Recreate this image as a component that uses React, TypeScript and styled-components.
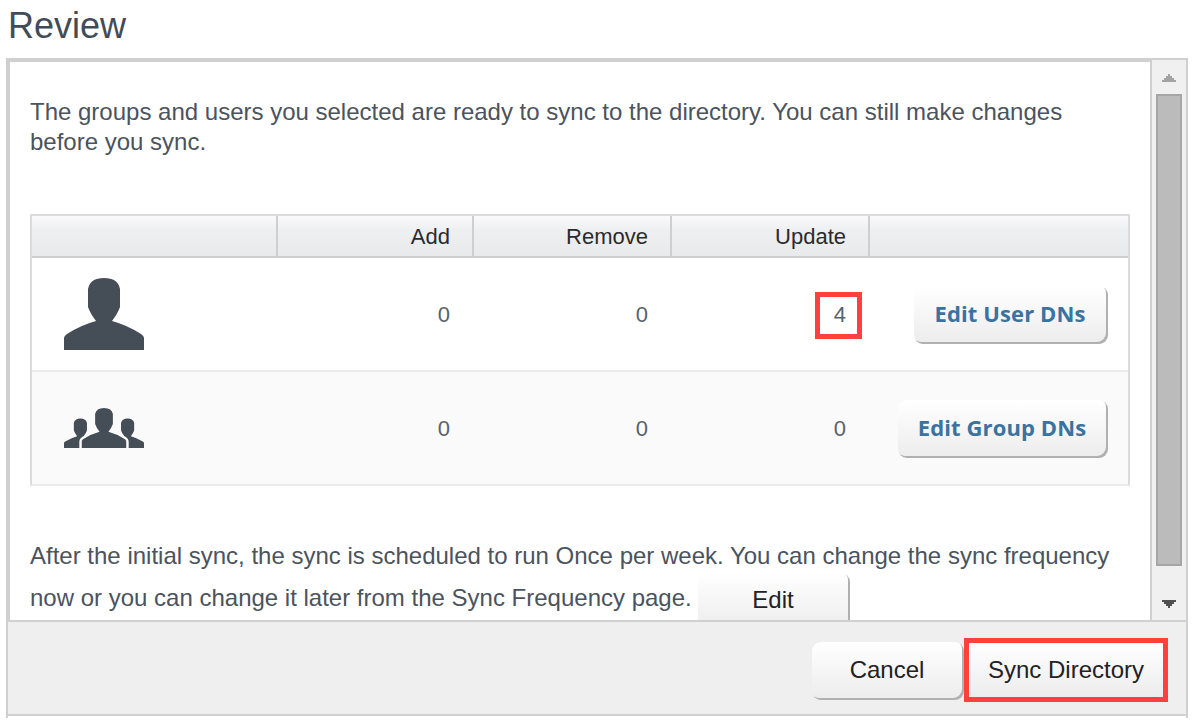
import React from "react";
import styled, { createGlobalStyle } from "styled-components";

const GlobalStyle = createGlobalStyle`
  *, *::before, *::after { box-sizing: border-box; }
  body {
    margin: 0;
    background: #fff;
    color: #4b535d;
    font-family: "Liberation Sans", Arial, sans-serif;
    overflow: hidden;
  }
`;

const Page = styled.div`
  width: 1200px;
  height: 726px;
  padding: 0 12px 0 6px;
`;

const Title = styled.h1`
  margin: 0;
  height: 58px;
  padding-left: 2px;
  font-size: 36px;
  line-height: 52px;
  font-weight: 400;
  color: #424c57;
`;

const Dialog = styled.div`
  height: 660px;
  border: solid #d0d0d0;
  border-width: 2px 2px 0;
`;

const Body = styled.div`
  display: flex;
  height: 560px;
`;

const Content = styled.div`
  flex: 1;
  height: 560px;
  overflow: hidden;
  border: solid #d0d0d0;
  border-width: 2px 2px 0;
  padding: 35px 20px 0;
`;

const Intro = styled.p`
  margin: 0;
  height: 117px;
  font-size: 24px;
  line-height: 30px;
`;

const Line = styled.span`
  display: block;
  white-space: nowrap;
`;

const Table = styled.div`
  width: 1100px;
  border: 2px solid #dcdcdc;
  border-bottom-color: #ebebeb;
`;

const columns = "246px 196px 198px 198px 258px";

const HeaderRow = styled.div`
  display: grid;
  grid-template-columns: ${columns};
  height: 42px;
  border-bottom: 2px solid #cfcfcf;
  background: linear-gradient(#fafafb, #eeeff1 35%, #e9eaeb);
`;

const HeaderCell = styled.div`
  padding-right: 22px;
  border-right: 2px solid #cfcfcf;
  text-align: right;
  font-size: 22px;
  line-height: 41px;
  color: #2b2b2b;
  &:last-child { border-right: 0; }
`;

const Row = styled.div<{ $shaded?: boolean }>`
  display: grid;
  grid-template-columns: ${columns};
  align-items: center;
  height: ${(p) => (p.$shaded ? 112 : 114)}px;
  background: ${(p) => (p.$shaded ? "#fafafa" : "#fff")};
  border-bottom: ${(p) => (p.$shaded ? 0 : 2)}px solid #ebebeb;
`;

const IconCell = styled.div`
  padding-left: 32px;
  svg { display: block; }
`;

const Count = styled.div`
  position: relative;
  padding: 2px 24px 0 0;
  text-align: right;
  font-size: 22px;
  line-height: 26px;
  color: #59626c;
`;

const CountMark = styled.span`
  position: absolute;
  right: 8px;
  top: -8px;
  width: 47px;
  height: 47px;
  border: 5px solid #ff403c;
`;

const ActionCell = styled.div`
  display: flex;
  justify-content: flex-end;
  padding: 2px 20px 0 0;
`;

const Button = styled.button<{ $width: number }>`
  flex: none;
  width: ${(p) => p.$width}px;
  height: 58px;
  padding: 0 2px 2px 0;
  border: 0;
  border-radius: 9px;
  background: linear-gradient(#fff, #ececec);
  box-shadow: inset -2px -2px 0 #b0b0b0;
  font: 24px "Liberation Sans", Arial, sans-serif;
  color: #222;
`;

const LinkButton = styled(Button)`
  padding-bottom: 4px;
  font: 700 22px "Open Sans", "Noto Sans", sans-serif;
  letter-spacing: 0.1px;
  color: #3a739f;
`;

const Schedule = styled.div`
  padding-top: 49px;
  font-size: 24px;
  line-height: 42px;
`;

const ScheduleRow = styled.div`
  display: flex;
  justify-content: flex-start;
`;

const ScheduleText = styled(Line)`
  width: 668px;
`;

const EditButton = styled(Button)`
  margin-top: -4px;
  padding-bottom: 4px;
`;

const Scrollbar = styled.div`
  display: flex;
  flex-direction: column;
  align-items: center;
  width: 34px;
  background: #f0f0f0;
  svg { display: block; margin: 14px 0 12px; }
  svg:last-child { margin: 34px 0 0; }
`;

const Thumb = styled.div`
  width: 26px;
  height: 472px;
  flex: none;
  background: #bbb;
  border: 2px solid #a6a6a6;
`;

const Footer = styled.div`
  display: flex;
  justify-content: flex-end;
  height: 96px;
  padding: 16px 18px 0 0;
  border: solid #d0d0d0;
  border-width: 2px 0;
  background: #efefef;
`;

const PrimaryFrame = styled.div`
  width: 204px;
  height: 64px;
  border: 5px solid #ff403c;
`;

const PrimaryButton = styled(Button)`
  height: 54px;
  border-radius: 2px;
  box-shadow: none;
  padding: 0;
`;

const CancelButton = styled(Button)`
  margin-top: 4px;
`;

const PERSON =
  "M0 72V60Q0 58 3 56Q17 47 32 43Q26 35 24 29V11Q26 0 40 0Q54 0 56 11V29Q54 35 48 43Q63 47 77 56Q80 58 80 60V72Z";

const UserIcon = () => (
  <svg width="80" height="72" viewBox="0 0 80 72" fill="#454d57">
    <path d={PERSON} />
  </svg>
);

const GroupIcon = () => (
  <svg width="80" height="40" viewBox="0 0 80 40" fill="#454d57">
    <path d={PERSON} transform="translate(0 10.5) scale(.41)" />
    <path d={PERSON} transform="translate(47.2 10.5) scale(.41)" />
    <path
      d={PERSON}
      transform="translate(17.8 0) scale(.555)"
      stroke="#fafafa"
      strokeWidth="9"
      paintOrder="stroke"
    />
  </svg>
);

export default function App() {
  return (
    <Page>
      <GlobalStyle />
      <Title>Review</Title>
      <Dialog>
        <Body>
          <Content>
            <Intro>
              <Line>The groups and users you selected are ready to sync to the directory. You can still make changes</Line>
              <Line>before you sync.</Line>
            </Intro>
            <Table>
              <HeaderRow>
                <HeaderCell />
                <HeaderCell>Add</HeaderCell>
                <HeaderCell>Remove</HeaderCell>
                <HeaderCell>Update</HeaderCell>
                <HeaderCell />
              </HeaderRow>
              <Row>
                <IconCell><UserIcon /></IconCell>
                <Count>0</Count>
                <Count>0</Count>
                <Count>4<CountMark /></Count>
                <ActionCell><LinkButton $width={194}>Edit User DNs</LinkButton></ActionCell>
              </Row>
              <Row $shaded>
                <IconCell><GroupIcon /></IconCell>
                <Count>0</Count>
                <Count>0</Count>
                <Count>0</Count>
                <ActionCell><LinkButton $width={210}>Edit Group DNs</LinkButton></ActionCell>
              </Row>
            </Table>
            <Schedule>
              <Line>After the initial sync, the sync is scheduled to run Once per week. You can change the sync frequency</Line>
              <ScheduleRow>
                <ScheduleText>now or you can change it later from the Sync Frequency page.</ScheduleText>
                <EditButton $width={152}>Edit</EditButton>
              </ScheduleRow>
            </Schedule>
          </Content>
          <Scrollbar>
            <svg width="14" height="8"><path d="M6 0h2v2h2v2h2v2h2v2H0V6h2V4h2V2h2Z" fill="#a3a3a3" /></svg>
            <Thumb />
            <svg width="14" height="8"><path d="M6 8h2V6h2V4h2V2h2V0H0v2h2v2h2v2h2Z" fill="#505050" /></svg>
          </Scrollbar>
        </Body>
        <Footer>
          <CancelButton $width={152}>Cancel</CancelButton>
          <PrimaryFrame><PrimaryButton $width={194}>Sync Directory</PrimaryButton></PrimaryFrame>
        </Footer>
      </Dialog>
    </Page>
  );
}
